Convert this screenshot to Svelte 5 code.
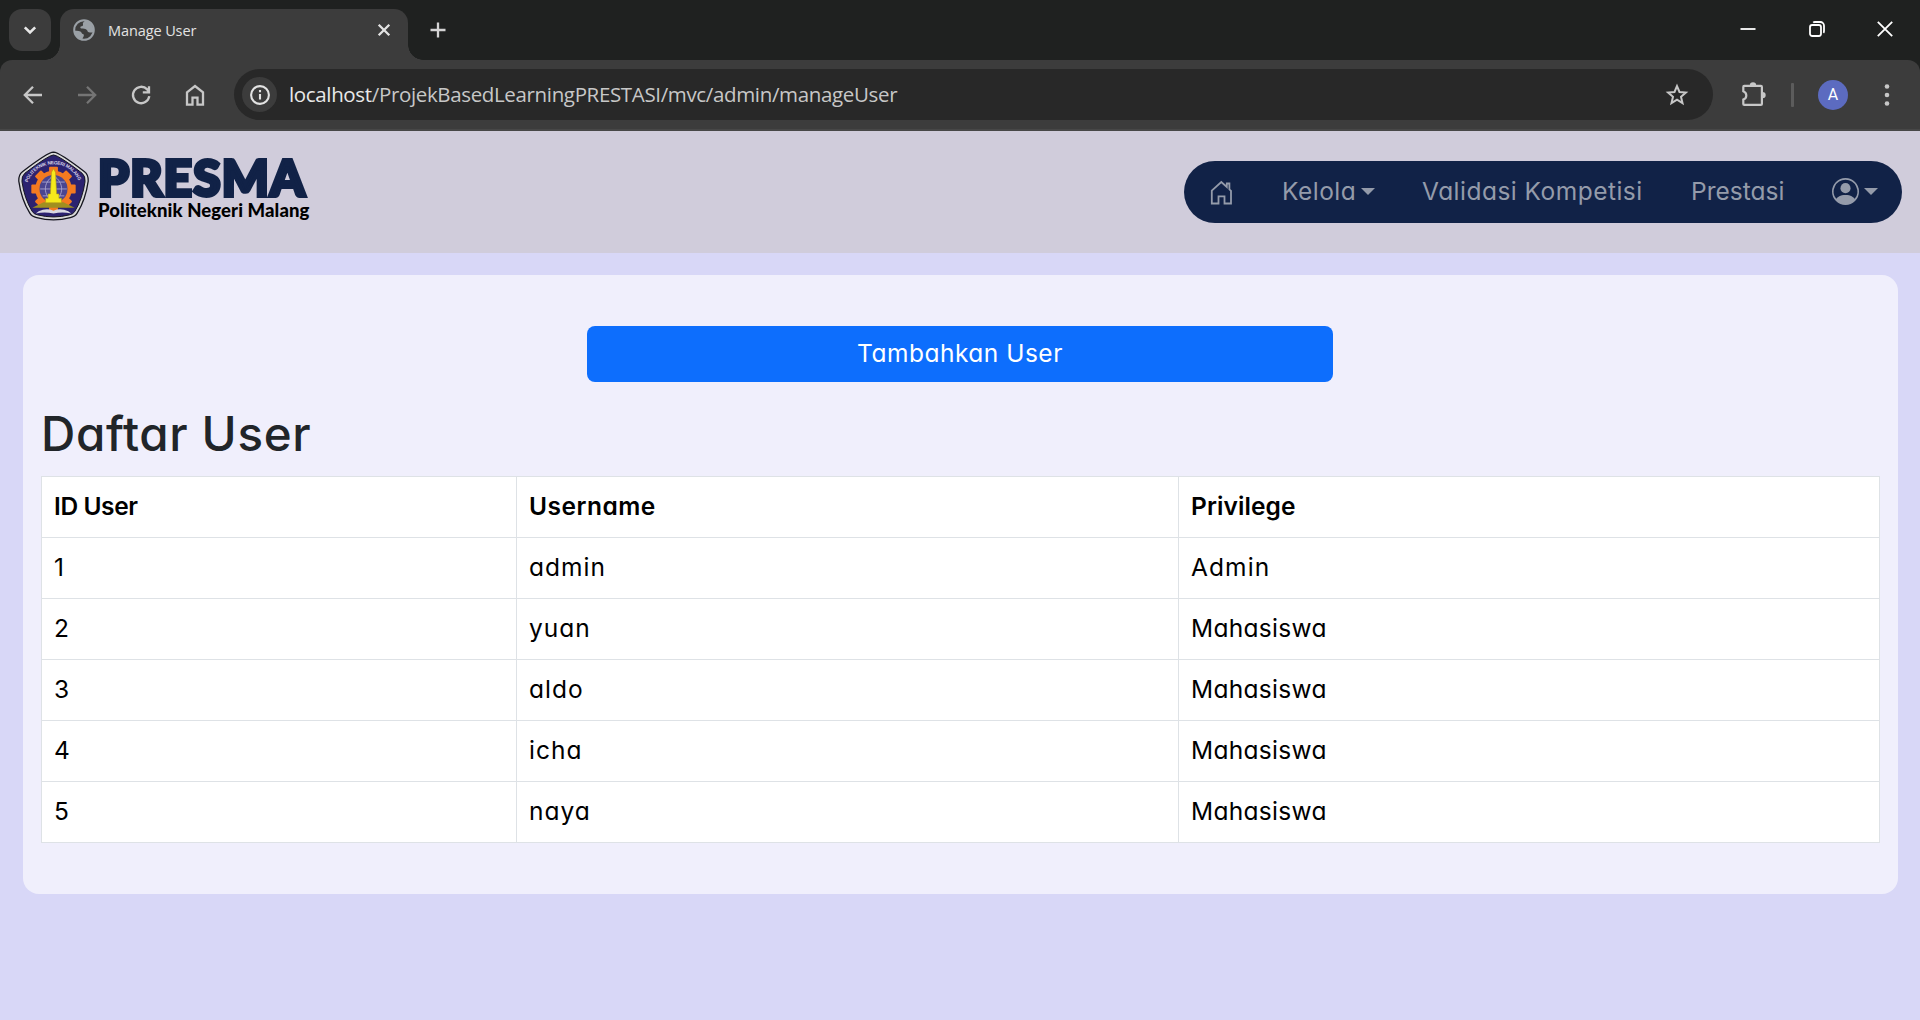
<script>
  const columns = ['ID User', 'Username', 'Privilege'];
  const users = [
    { id: 1, username: 'admin', privilege: 'Admin' },
    { id: 2, username: 'yuan', privilege: 'Mahasiswa' },
    { id: 3, username: 'aldo', privilege: 'Mahasiswa' },
    { id: 4, username: 'icha', privilege: 'Mahasiswa' },
    { id: 5, username: 'naya', privilege: 'Mahasiswa' }
  ];
  const gearTeeth = [0, 45, 90, 135, 180, 225, 270, 315];
</script>

<div class="window">
  <div class="tabstrip">
    <button class="tab-search" aria-label="Search tabs">
      <svg width="16" height="16" viewBox="0 0 16 16"><path d="M2.8 5.4 8 10.500l5.200-5.100" /></svg>
    </button>
    <div class="tab">
      <svg class="globe" width="22" height="22" viewBox="0 0 22 22">
        <circle cx="11" cy="11" r="9.800" />
        <path d="M12.500 1.600C10.300 3 9.600 4 10 5.400c.4 1.300-1 1.700-2.200 2.200-.9.500-.5 1.800.6 2 2.200.3 3.700-.2 5.200 1.200 1.300 1.200.9 2.300 2.300 2.500 1.400.2 2.900.5 4.500-.4.600-4.900-2-9.700-7.900-11.300Z" />
        <path d="M1.400 11.800c2-.2 4.300-.3 6 .6 1.600.8 1 2.300 2.600 2.700 1.300.4 1 2.600 0 3.300-.5.500-.7 1.300-.5 2.200-4.700-.8-8-4.300-8.100-8.800Z" />
      </svg>
      <span class="tab-title">Manage User</span>
      <svg class="tab-close" width="14" height="14" viewBox="0 0 14 14"><path d="m1.700 1.700 10.600 10.600M12.300 1.700 1.700 12.300" /></svg>
    </div>
    <svg class="new-tab" width="16" height="16" viewBox="0 0 16 16"><path d="M8 .5v15M.5 8h15" /></svg>
    <div class="window-controls">
      <svg width="16" height="16" viewBox="0 0 16 16"><path d="M.5 8h15" /></svg>
      <svg width="16" height="16" viewBox="0 0 16 16"><rect x="1" y="4" width="11" height="11" rx="2.200" /><path d="M4.200 1.600Q4.800 1 6 1h5.300A3.700 3.700 0 0 1 15 4.700V10q0 1.200-.6 1.800" /></svg>
      <svg width="16" height="16" viewBox="0 0 16 16"><path d="m.8.8 14.400 14.400M15.200.8.8 15.200" /></svg>
    </div>
  </div>

  <div class="toolbar">
    <div class="nav-buttons">
      <svg width="24" height="24" viewBox="0 0 24 24"><path d="M21 12H4.500M12 3.800 3.800 12l8.200 8.200" /></svg>
      <svg class="disabled" width="24" height="24" viewBox="0 0 24 24"><path d="M3 12h16.500M12 3.800l8.200 8.200-8.200 8.200" /></svg>
      <svg width="24" height="24" viewBox="0 0 24 24"><path d="M20.300 13.200A8.200 8.200 0 1 1 18.200 6.400L20 8.600M20 3.200v6.200h-6.200" /></svg>
      <svg width="24" height="24" viewBox="0 0 24 24"><path d="M4 9.300 12 3l8 6.300V21.700h-5.500v-7h-5v7H4Z" /></svg>
    </div>
    <div class="omnibox">
      <span class="site-info">
        <svg width="22" height="22" viewBox="0 0 22 22"><circle cx="11" cy="11" r="8.900" /><path d="M11 10v5.500M11 6v2.300" /></svg>
      </span>
      <span class="url"><b>localhost</b>/ProjekBasedLearningPRESTASI/mvc/admin/manageUser</span>
      <svg class="star" width="26" height="26" viewBox="0 0 26 26"><path d="m13 4.100 2.500 5.900 6.400.6-4.900 4.200 1.500 6.300L13 17.700l-5.500 3.400L9 14.800l-4.900-4.200 6.400-.6Z" /></svg>
    </div>
    <svg class="puzzle" width="28" height="28" viewBox="0 0 28 28">
      <path d="M5.200 4.900h16.700q1 0 1 1v17q0 1-1 1H5.200q-.9 0-.9-1v-4.300c4-1.600 4-6.800 0-8.400V5.900q0-1 .9-1Z" />
      <path class="solid" d="M10.800 4.400a3.200 3.200 0 0 1 6.400 0ZM23.500 10.900a3.200 3.200 0 0 1 0 6.400Z" />
    </svg>
    <span class="divider"></span>
    <span class="avatar">A</span>
    <svg class="menu" width="6" height="24" viewBox="0 0 6 24"><circle cx="3" cy="3.500" r="2.300" /><circle cx="3" cy="12" r="2.300" /><circle cx="3" cy="20.500" r="2.300" /></svg>
  </div>

  <div class="page">
    <header>
      <div class="brand">
        <svg class="crest" width="71" height="70" viewBox="0 0 72 70">
          <path class="crest-rim" d="M36 .6Q42 .8 67.500 20.500Q71.500 23.500 71.200 30Q68.500 49 60 62.500Q58 66 53 67Q36 71.500 19 67Q14 66 12 62.500Q3.500 49 .8 30Q.5 23.500 4.500 20.500Q30 .8 36 .6Z" />
          <path class="crest-body" d="M36 3.500Q41 3.700 65 22Q68.500 25 68 30.500Q65.500 48 57.500 61Q56 63.500 52 64.300Q36 68.500 20 64.300Q16 63.500 14.500 61Q6.500 48 4 30.500Q3.500 25 7 22Q31 3.700 36 3.500Z" />
          <g class="gear">
            {#each gearTeeth as angle}
              <rect x="31.500" y="15.500" width="9" height="9" rx="1" transform="rotate({angle} 36 38)" />
            {/each}
            <circle cx="36" cy="38" r="18.500" />
          </g>
          <circle class="world" cx="36" cy="38" r="14.200" />
          <path class="grid" d="M22.500 38h27M24.500 31h23M25 45h22M36 24.500v27M36 24.500c-11 7-11 20 0 27M36 24.500c11 7 11 20 0 27" />
          <path class="base" d="M26 51.500h20L57.500 57h-43Z" />
          <path class="monument" d="M36 17.500 38 21l1.200 22h2.300v4.500H44V52H28v-4.500h2.500V43h2.300L34 21Z" />
          <path class="book" d="M21 60.500q8-3.500 15-.5 7-3 15 .5l3 2.500q-9-2.500-18 0-9-2.500-18 0Z" />
          <path id="crest-arc" class="arc" d="M10 31.500A27.500 27.500 0 0 1 62 31.500" />
          <text class="crest-text"><textPath href="#crest-arc" textLength="66">POLITEKNIK NEGERI MALANG</textPath></text>
        </svg>
        <div class="wordmark">
          <strong>PRESMA</strong>
          <span>Politeknik Negeri Malang</span>
        </div>
      </div>
      <nav>
        <svg class="home" width="25" height="25" viewBox="0 0 25 25"><path d="M2.800 10.600 12.300 2l5.500 5V3.500h2.600v5.800l1.600 1.500V23.500h-6.500v-7.200h-6v7.200H2.800Z" /></svg>
        <a class="kelola" href="#kelola">Kelola</a><i class="caret"></i>
        <a class="validasi" href="#validasi">Validasi Kompetisi</a>
        <a class="prestasi" href="#prestasi">Prestasi</a>
        <svg class="person" width="27" height="27" viewBox="0 0 16 16"><path d="M11 6a3 3 0 1 1-6 0 3 3 0 0 1 6 0" /><path fill-rule="evenodd" d="M0 8a8 8 0 1 1 16 0A8 8 0 0 1 0 8m8-7a7 7 0 0 0-5.468 11.370C3.242 11.226 4.805 10 8 10s4.757 1.225 5.468 2.370A7 7 0 0 0 8 1" /></svg>
        <i class="caret user-caret"></i>
      </nav>
    </header>

    <main>
      <button class="add">Tambahkan User</button>
      <h1>Daftar User</h1>
      <table>
        <thead>
          <tr>{#each columns as column}<th>{column}</th>{/each}</tr>
        </thead>
        <tbody>
          {#each users as user}
            <tr><td>{user.id}</td><td>{user.username}</td><td class:admin={user.privilege === 'Admin'}>{user.privilege}</td></tr>
          {/each}
        </tbody>
      </table>
    </main>
  </div>
</div>

<style>
  :global(body) { margin: 0; background: #d8d7f7; overflow: hidden; }
  * { box-sizing: border-box; }
  svg { display: block; flex: none; fill: none; overflow: visible; }
  button { border: 0; padding: 0; }

  .window { display: flex; flex-direction: column; width: 1920px; height: 1020px; font-family: "Open Sans", sans-serif; background: #1f2120; }

  .tabstrip { display: flex; height: 60px; padding: 9px 9px 0; }
  .tab-search { display: grid; place-items: center; width: 42px; height: 42px; border-radius: 13px; background: #3c3c3c; stroke: #e8e8e8; stroke-width: 2.600; }
  .tab { position: relative; display: flex; align-items: center; width: 348px; height: 51px; margin-left: 9px; padding: 0 17px 9px 13px; border-radius: 14px 14px 0 0; background: #3c3c3c; }
  .tab::before, .tab::after { content: ""; position: absolute; bottom: 0; width: 15px; height: 15px; }
  .tab::before { right: 100%; background: radial-gradient(circle at 0 0, transparent 14.500px, #3c3c3c 15px); }
  .tab::after { left: 100%; background: radial-gradient(circle at 100% 0, transparent 14.500px, #3c3c3c 15px); }
  .globe circle { stroke: #9aa0a6; stroke-width: 2; }
  .globe path { fill: #9aa0a6; }
  .tab-title { flex: 1; margin: 2px 0 0 13px; font-size: 14.500px; line-height: 20px; color: #e3e3e3; letter-spacing: -0.1px; }
  .tab-close { stroke: #e3e3e3; stroke-width: 2.300; }
  .new-tab { margin: 13px 0 0 22px; stroke: #d4d4d4; stroke-width: 2.300; }
  .window-controls { display: flex; gap: 52.500px; margin: 12px 18px 0 auto; stroke: #fff; stroke-width: 1.800; }

  .toolbar { display: flex; align-items: center; height: 71px; padding: 0 30px 0 6px; border-bottom: 2px solid #474747; border-radius: 12px 12px 0 0; background: #3c3c3c; }
  .nav-buttons { display: flex; gap: 30px; padding: 0 15px; stroke: #c7c7c7; stroke-width: 2.300; }
  .disabled { stroke: #757575; }
  .omnibox { display: flex; flex: none; align-items: center; width: 1479px; height: 51px; margin-left: 12px; padding: 0 23px 0 8px; border-radius: 26px; background: #282828; }
  .site-info { display: grid; place-items: center; width: 35px; height: 35px; border-radius: 50%; background: #3c3c3c; stroke: #e3e3e3; stroke-width: 2.100; }
  .url { flex: 1; margin: 0 0 2px 12px; font-size: 20.500px; line-height: 28px; letter-spacing: -0.350px; color: #c7c7c7; white-space: nowrap; }
  .url b { font-weight: 400; color: #e8e8e8; }
  .star { stroke: #c7c7c7; stroke-width: 2; }
  .puzzle { margin-left: 26px; stroke: #c7c7c7; stroke-width: 2.200; }
  .solid { fill: #c7c7c7; stroke: none; }
  .divider { width: 3px; height: 24px; margin-left: 24px; border-radius: 1px; background: #5c5c5c; }
  .avatar { display: grid; place-items: center; width: 30px; height: 30px; margin: 0 36px 0 24px; border-radius: 50%; background: #5c6bc0; color: #fff; font: 16px/30px Roboto, sans-serif; }
  .menu { fill: #c7c7c7; }

  .page { flex: 1; background: #d8d7f7; font-family: Inter, sans-serif; font-feature-settings: "cv11"; }
  header { display: flex; justify-content: space-between; height: 122px; padding: 20px 18px 0; background: #d0ccdb; }
  .brand { display: flex; }
  .crest-rim { fill: #d9d9d9; stroke: #15151f; stroke-width: 1.300; }
  .crest-body { fill: #2c2270; stroke: #15151f; stroke-width: 1; }
  .gear { fill: #f47a20; }
  .world { fill: #4a4590; }
  .grid { stroke: #a9a5d0; stroke-width: .9; }
  .base { fill: #a08f20; }
  .monument { fill: #f5ea1c; stroke: #b39d12; stroke-width: .6; }
  .book { fill: #d9d9e2; }
  .crest-text { fill: #d4d0e6; font: 700 4.800px "Liberation Sans", sans-serif; }
  .wordmark { display: flex; flex-direction: column; margin-left: 9px; font-family: Lato, sans-serif; white-space: nowrap; }
  .wordmark strong { height: 48px; font-size: 49.500px; font-weight: 900; line-height: 52px; letter-spacing: 1.200px; color: #112247; -webkit-text-stroke: 3.800px #112247; }
  .wordmark span { font-size: 18.500px; font-weight: 900; line-height: 22px; letter-spacing: .1px; color: #000; }

  nav { display: flex; align-items: center; width: 718px; height: 62px; margin-top: 10px; padding-left: 25px; border-radius: 31px; background: #112247; color: #949baa; }
  nav a { padding-bottom: 2px; color: inherit; font-size: 24.500px; line-height: 36px; letter-spacing: .480px; text-decoration: none; white-space: nowrap; }
  .home { stroke: #949baa; stroke-width: 1.800; }
  .person { margin: 0 0 2px 48px; fill: #949baa; }
  .kelola { width: 72px; margin-left: 48px; }
  .validasi { width: 221px; margin-left: 47px; }
  nav .prestasi { width: 93px; margin-left: 48px; letter-spacing: 0; }
  .caret { margin: 0 0 2px 7px; border: 7px solid transparent; border-top-color: #949baa; border-bottom: 0; }
  .user-caret { margin-left: 5px; }

  main { display: flex; flex-direction: column; width: 1875px; height: 619px; margin: 22px 0 0 23px; padding: 51px 19px 0 18px; border-radius: 16px; background: #f0effc; }
  .add { align-self: center; width: 746px; height: 56px; border-radius: 8px; background: #0d6efd; color: #fff; font: 24.500px/54px Inter, sans-serif; font-feature-settings: inherit; letter-spacing: .5px; padding-bottom: 2px; }
  h1 { margin: 22px 0 12px; font-size: 47.500px; font-weight: 500; line-height: 60px; letter-spacing: .650px; color: #212529; }
  table { width: 1839px; border-collapse: collapse; table-layout: fixed; background: #fff; color: #000; font-size: 24.500px; }
  th, td { height: 61px; padding: 0 12px 2px; border: 1px solid #dee2e6; text-align: left; line-height: 36px; letter-spacing: .3px; }
  th { font-weight: 600; letter-spacing: .1px; }
  th:nth-child(1) { width: 475px; letter-spacing: -.4px; }
  th:nth-child(2) { width: 662px; letter-spacing: .5px; }
  td:nth-child(2) { letter-spacing: 1px; }
  .admin { letter-spacing: 1.100px; }
</style>
